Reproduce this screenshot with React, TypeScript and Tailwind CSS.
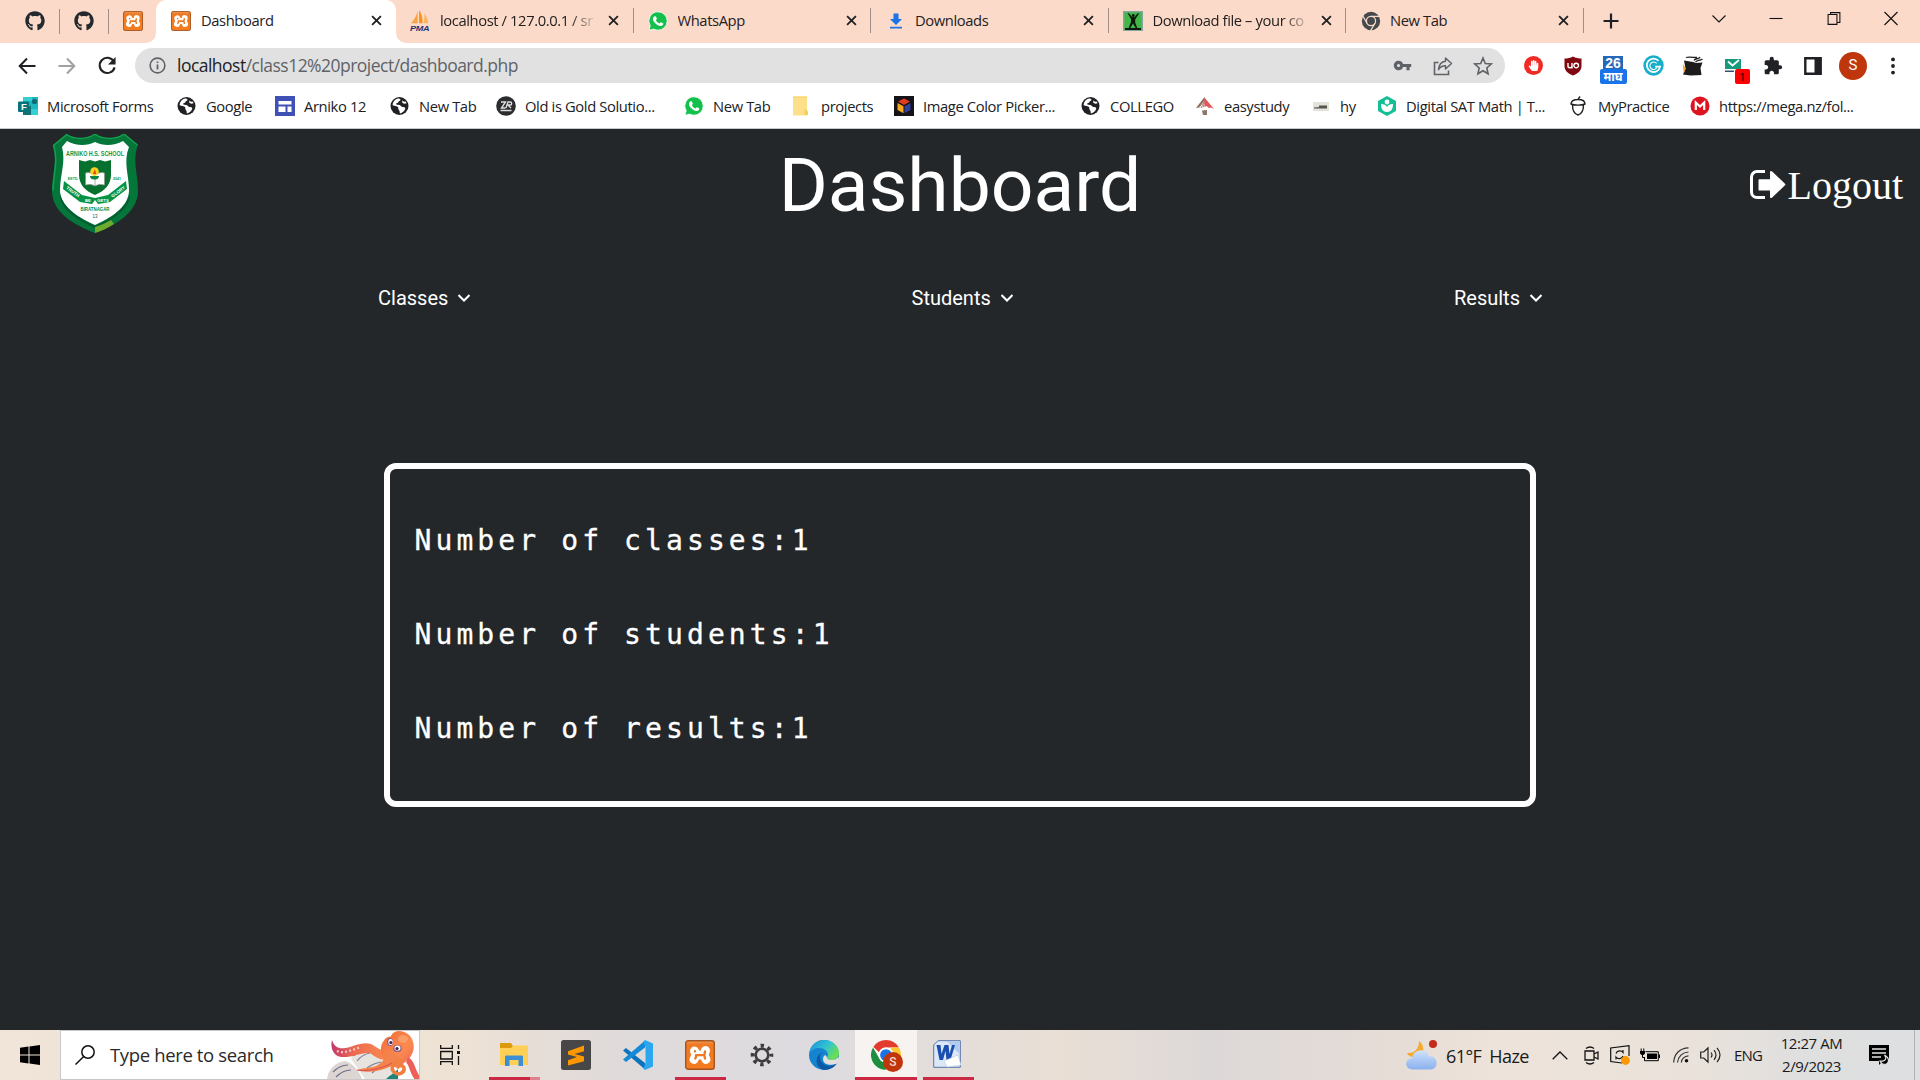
import React from "react";
import { FaGithub, FaHandPaper } from "react-icons/fa";
import { MdExtension, MdVpnKey } from "react-icons/md";

type P = { className?: string };

const Xampp = ({ className = "" }: P) => (
  <svg viewBox="0 0 30 30" className={className}>
    <defs>
      <linearGradient id="xg" x1="0" y1="0" x2="0" y2="1">
        <stop offset="0" stopColor="#f3a064" />
        <stop offset="0.12" stopColor="#ee7a24" />
        <stop offset="1" stopColor="#f57c20" />
      </linearGradient>
    </defs>
    <rect x="0.7" y="0.7" width="28.6" height="28.6" rx="2.6" fill="url(#xg)" stroke="#a3541f" strokeWidth="1.4" />
    <g fill="none" strokeLinecap="round" strokeLinejoin="round">
      <path d="M9.500 11L11 15 9 19.500M20.500 10.500L19 15l2 4.500M11 15h8" stroke="#fff" strokeWidth="9" />
      <path d="M10 11.200v.3M11 17v-1.800h8M20 11.500l-.7 3.500.7 3.500M10.300 18.500l.7-1.500" stroke="#f07a22" strokeWidth="2.300" />
      <path d="M15 7v2.500M15 20.500V23" stroke="#f07a22" strokeWidth="1.600" />
    </g>
  </svg>
);

const Whatsapp = ({ className = "" }: P) => (
  <svg viewBox="0 0 20 20" className={className}>
    <path d="M10 .8a9.200 9.200 0 0 1 0 18.400c-1.600 0-3-.4-4.300-1.100L1 19.300l1.200-4.500A9.200 9.200 0 0 1 10 .8z" fill="#12c04b" stroke="#fff" strokeWidth=".8" />
    <path d="M7.200 5.200c.5 0 .6.100.8.500l.8 1.900c.1.300 0 .5-.9 1.600.9 1.700 2.100 2.700 3.700 3.300 1-1.300 1.100-1.400 1.500-1.200l1.900.9c.4.200.4.400.3.900-.3 1.500-1.600 2-2.700 2-3.600-.3-7.300-3.800-7.700-7-.1-1.300.8-2.900 2.300-2.900z" fill="#fff" />
  </svg>
);

const Globe = ({ className = "" }: P) => (
  <svg viewBox="0 0 20 20" className={className}>
    <circle cx="9.500" cy="10" r="9" fill="#202124" />
    <path d="M8.200 2.400c1.200 0 2.600.5 2.300 1.600-.3 1-1.900.8-2 1.900 0 1.200-2.300.6-2.400 2 0 1 2.800.5 4 1.300 1.300.9 1.700 2 3.300 1.900 1.500 0 2.200 1 1.700 2.200-.6 1.700-2.600 3.900-5 4.100-.7-.5-.2-1.700-.6-2.500-.4-.9-1.300-1.300-1.200-2.500.1-1.100-.6-1.900-2-2.100L2.600 9.200C2.800 5.700 5 3 8.200 2.400z" fill="#fff" />
    <path d="M12.200 4.500l2 1.200 1.400-.3 1 1.800-2.300.6-2-1z" fill="#fff" />
  </svg>
);

const Chrome = ({ className = "" }: P) => (
  <svg viewBox="0 0 48 48" className={className}>
    <circle cx="24" cy="24" r="24" fill="#fff" />
    <path d="M24 0a24 24 0 0 1 20.800 12H24a12 12 0 0 0-11.200 7.700L3.800 11A24 24 0 0 1 24 0z" fill="#e33b2e" />
    <path d="M44.800 12A24 24 0 0 1 24 48l10.400-18A12 12 0 0 0 32 15l-1-3z" fill="#fcc934" />
    <path d="M3.200 12l10.400 18A12 12 0 0 0 27 35.600L23 48A24 24 0 0 1 3.200 12z" fill="#1e8e3e" />
    <circle cx="24" cy="24" r="12" fill="#fff" />
    <circle cx="24" cy="24" r="9.400" fill="#1a73e8" />
  </svg>
);

const ChromeGray = ({ className = "" }: P) => (
  <svg viewBox="0 0 48 48" className={className}>
    <circle cx="24" cy="24" r="22" fill="#45494d" />
    <g stroke="#fbdac9" strokeWidth="3" fill="none">
      <circle cx="24" cy="24" r="11" />
      <path d="M24 13h20M14.500 29.500L4.500 12M33.500 29.500L23 47" />
    </g>
    <circle cx="24" cy="24" r="7" fill="#45494d" />
  </svg>
);

const Pma = ({ className = "" }: P) => (
  <svg viewBox="0 0 22 24" className={className}>
    <path d="M8 2v13H1C4 12 6.500 8 8 2z" fill="#f9a33a" />
    <path d="M9.500 1c3 4 4 9 3.500 14H9.500z" fill="#f7931e" />
    <path d="M15 5c2.500 3 4 7 4 10h-5c1-3 1.200-6 1-10z" fill="#fbb55c" />
    <text x="0" y="23.500" fontSize="8.500" fontWeight="700" fontStyle="italic" textLength="20" lengthAdjust="spacingAndGlyphs" fill="#2b3271" fontFamily="Liberation Sans">PMA</text>
  </svg>
);

const DownloadIcon = ({ className = "" }: P) => (
  <svg viewBox="0 0 20 20" className={className}>
    <path d="M7.500 2.500h5v5.500h3.500l-6 6-6-6h3.500z" fill="#1a73e8" />
    <path d="M4 15.800h12v1.700H4z" fill="#1a73e8" />
  </svg>
);

const ManIcon = ({ className = "" }: P) => (
  <svg viewBox="0 0 20 20" className={className}>
    <rect x=".7" y=".7" width="18.600" height="18.600" fill="#43b649" stroke="#83a79a" strokeWidth="1.400" />
    <path d="M4.500 2l1 0 3.700 4L10 5l1.500 1L15 2l1 .5L12.200 8.500v3l2.300 6h-1.500L10 12.500l-3 5H5.500L8 11V8z" fill="#0b1a0c" />
    <circle cx="10.300" cy="4.300" r="1.400" fill="#0b1a0c" />
    <path d="M2 17h16v2H2z" fill="#0b1a0c" />
  </svg>
);

const Close = () => (
  <svg viewBox="0 0 12 12" className="size-[11px] shrink-0">
    <path d="M1.200 1.200l9.600 9.600M10.800 1.200L1.200 10.800" stroke="#202124" strokeWidth="2" />
  </svg>
);

const inactiveTabs = [
  { icon: <Pma className="h-[23px] w-[21px]" />, label: "localhost / 127.0.0.1 / sr", fade: true },
  { icon: <Whatsapp className="size-5" />, label: "WhatsApp" },
  { icon: <DownloadIcon className="size-5" />, label: "Downloads" },
  { icon: <ManIcon className="size-5" />, label: "Download file – your co", fade: true },
  { icon: <ChromeGray className="size-5" />, label: "New Tab" },
];

function TabStrip() {
  return (
    <div className="flex h-[43px] bg-[#fbdac9] text-[14.75px] tracking-[-0.4px] text-[#24201f]">
      <div className="flex w-[156px] shrink-0 items-center pb-px">
        <FaGithub className="ml-[25px] size-[20px] text-[#24292f]" />
        <span className="ml-[14px] h-[25px] w-px bg-[#a28d84]" />
        <FaGithub className="ml-[14px] size-[20px] text-[#24292f]" />
        <span className="ml-[14px] h-[25px] w-px bg-[#a28d84]" />
        <Xampp className="ml-[14px] size-[20px]" />
      </div>
      <div className="relative flex w-[240px] shrink-0 items-center rounded-t-[10px] bg-white pr-[14px] pb-[2px] pl-[15px]">
        <svg viewBox="0 0 10 10" className="absolute bottom-0 -left-[10px] size-[10px]"><path d="M10 0v10H0A10 10 0 0 0 10 0z" fill="#fff" /></svg>
        <svg viewBox="0 0 10 10" className="absolute -right-[10px] bottom-0 size-[10px]"><path d="M0 0v10h10A10 10 0 0 1 0 0z" fill="#fff" /></svg>
        <Xampp className="size-[20px] shrink-0" />
        <span className="ml-[10px] flex-1">Dashboard</span>
        <Close />
      </div>
      <div className="flex">
        {inactiveTabs.map((t, i) => (
          <div key={i} className="flex w-[237.5px] items-center pb-[2px] pl-[14px]">
            <span className="flex w-[21px] shrink-0 justify-center">{t.icon}</span>
            <span className={"ml-[9px] w-[158px] shrink-0 overflow-hidden whitespace-nowrap " + (t.fade ? "[mask-image:linear-gradient(to_right,#000_82%,transparent)]" : "")}>{t.label}</span>
            <span className="ml-[10px] flex flex-1 items-center justify-between"><Close /><span className="h-[25px] w-px bg-[#a28d84]" /></span>
          </div>
        ))}
      </div>
      <svg viewBox="0 0 16 16" className="mt-[13px] ml-[19.500px] size-4 shrink-0"><path d="M8 .5v15M.5 8h15" stroke="#202124" strokeWidth="2.200" /></svg>
      <div className="ml-auto flex pt-[11px]">
        <svg viewBox="0 0 58 16" className="h-4 w-[58px]"><path d="M23.500 4.500L30 11l6.500-6.500" fill="none" stroke="#111" strokeWidth="1.100" /></svg>
        <svg viewBox="0 0 58 16" className="h-4 w-[58px]"><path d="M22.500 7.500h13" stroke="#111" strokeWidth="1.100" /></svg>
        <svg viewBox="0 0 58 16" className="h-4 w-[57px]"><path d="M23.500 3.500h9v10h-9zM26 3.500v-2h9.500v10h-3" fill="none" stroke="#111" strokeWidth="1.100" /></svg>
        <svg viewBox="0 0 58 16" className="h-4 w-[58px]"><path d="M22.500 1l13 13M35.500 1l-13 13" stroke="#111" strokeWidth="1.100" /></svg>
      </div>
    </div>
  );
}

function Extensions() {
  return (
    <div className="ml-[8px] flex items-center [&>*]:flex [&>*]:w-10 [&>*]:items-center [&>*]:justify-center">
      <span><span className="flex size-[19px] items-center justify-center rounded-full bg-[#f02a24] text-white"><FaHandPaper className="size-[11px]" /></span></span>
      <span>
        <svg viewBox="0 0 20 20" className="size-[20px]">
          <path d="M10 .5c2.500 1.500 5.500 2 8.500 2V10c0 5-4 7.500-8.500 9.500C5.500 17.500 1.500 15 1.500 10V2.500c3 0 6-.5 8.500-2z" fill="#800610" />
          <path d="M5 7v3.200c0 2 4 2 4 0V7v5.500M15.500 9.500a2.300 2.300 0 1 1-4.600 0 2.300 2.300 0 0 1 4.600 0z" fill="none" stroke="#fff" strokeWidth="1.400" />
        </svg>
      </span>
      <span>
        <span className="mt-[9px] flex flex-col items-center">
          <span className="flex h-[13px] w-[20px] items-center justify-center bg-[#2668b8] font-['Liberation_Sans',sans-serif] text-[14px] leading-none font-bold text-white">26</span>
          <span className="flex h-[15px] w-[27px] items-center justify-center overflow-hidden rounded-[2px] bg-[#1a73e8] text-[12px] leading-none font-bold text-white">माघ</span>
        </span>
      </span>
      <span>
        <svg viewBox="0 0 20 20" className="size-[21px]">
          <circle cx="10" cy="10" r="9.700" fill="#19aec8" />
          <path d="M14.800 5.500A6.400 6.400 0 1 0 16.300 11h-4.800" fill="none" stroke="#fff" strokeWidth="1.700" />
          <path d="M13 8a3.600 3.600 0 1 0 .3 4" fill="none" stroke="#fff" strokeWidth="1" />
        </svg>
      </span>
      <span>
        <svg viewBox="0 0 22 22" className="size-[22px]">
          <path d="M2 5.500l9 1.500 3 1 6.500-.5-2 5.500 1 7-11 .5-7.500-1 2.500-6z" fill="#1c1c1c" />
          <path d="M12 5.500c1-3 5-.5 6-3.500M13.500 7c2-2 4-1 7-3M4 2.500c2-1 8 0 11 0" fill="none" stroke="#222" strokeWidth="1.300" />
          <path d="M.8 9l3 4.500-2 5z" fill="#f0a030" />
        </svg>
      </span>
      <span>
        <span className="relative flex size-[22px]">
          <svg viewBox="0 0 22 22" className="size-[22px]">
            <path d="M3 4h16v10H3z" fill="#159a7c" />
            <path d="M6 6.500l4.500 4L17 5" fill="none" stroke="#fff" strokeWidth="1.800" />
            <path d="M3 15.500h9V17H3z" fill="#34536b" />
          </svg>
          <span className="absolute top-[14px] left-[13px] flex h-[15px] w-[15px] items-center justify-center rounded-[2px] bg-[#fe0000] text-[11px] leading-none text-black">1</span>
        </span>
      </span>
      <span><MdExtension className="size-[20px] text-[#202124]" /></span>
      <span><svg viewBox="0 0 18 18" className="size-[18px]"><path d="M1.300 1.300h15.400v15.400H1.300z" fill="#fff" stroke="#202124" strokeWidth="2.400" /><path d="M10.500 1H17v16h-6.500z" fill="#202124" /></svg></span>
      <span><span className="flex size-[28px] items-center justify-center rounded-full bg-[#bf360c] font-['Roboto',sans-serif] text-[15px] text-white">S</span></span>
      <span><svg viewBox="0 0 4 18" className="h-[18px] w-1"><circle cx="2" cy="2.400" r="1.900" fill="#202124" /><circle cx="2" cy="9" r="1.900" fill="#202124" /><circle cx="2" cy="15.600" r="1.900" fill="#202124" /></svg></span>
    </div>
  );
}

function Toolbar() {
  return (
    <div className="flex h-[45px] items-center bg-white">
      <svg viewBox="0 0 18 18" className="ml-[18px] size-[18px]"><path d="M17.500 9H2M9 1.500L1.700 9 9 16.500" fill="none" stroke="#202124" strokeWidth="2" /></svg>
      <svg viewBox="0 0 18 18" className="ml-[22px] size-[18px]"><path d="M.5 9H16M9 1.500L16.300 9 9 16.500" fill="none" stroke="#a0a1a3" strokeWidth="2" /></svg>
      <svg viewBox="0 0 20 20" className="ml-[22px] size-[19px]"><path d="M16.500 5.500A8 8 0 1 0 17.500 12" fill="none" stroke="#202124" strokeWidth="2.200" /><path d="M18.500 1v8h-8z" fill="#202124" /></svg>
      <div className="ml-[18px] flex h-[35px] w-[1370px] items-center rounded-full bg-[#e1e1e1] text-[#5f6368]">
        <svg viewBox="0 0 18 18" className="ml-[14px] size-[17px]"><circle cx="9" cy="9" r="7.800" fill="none" stroke="#5f6368" strokeWidth="1.700" /><path d="M9 8v5.200M9 4.700v1.700" stroke="#5f6368" strokeWidth="1.900" /></svg>
        <span className="ml-[11px] flex-1 text-[17.500px] tracking-[-0.520px]"><span className="text-[#202124]">localhost</span>/class12%20project/dashboard.php</span>
        <MdVpnKey className="mr-[21px] size-[19px]" />
        <svg viewBox="0 0 20 20" className="mr-[20px] size-[20px]"><path d="M5.500 6.500H1.500v12h14v-4" fill="none" stroke="#5f6368" strokeWidth="1.600" /><path d="M12.500 2l6 5.500-6 5.500v-3.300c-3 0-5.500 1-7 4 .3-4 2.500-8 7-8.500z" fill="none" stroke="#5f6368" strokeWidth="1.500" strokeLinejoin="round" /></svg>
        <svg viewBox="0 0 20 20" className="mr-[12px] size-[20px]"><path d="M10 2l2.300 5.500 6 .5-4.500 4 1.300 5.800L10 14.700l-5.100 3.100L6.200 12 1.700 8l6-.5z" fill="none" stroke="#5f6368" strokeWidth="1.600" /></svg>
      </div>
      <Extensions />
    </div>
  );
}

const bookmarks = [
  { w: "w-[159px]", label: "Microsoft Forms", icon: <svg viewBox="0 0 20 20" className="size-5"><path d="M5 1h15v18H5z" fill="#1fb5bd" /><path d="M5 1h9v4H5zM12 13h8v6h-8z" fill="#35cfd2" /><path d="M5 10h8v9H5z" fill="#0f7076" /><circle cx="16.500" cy="5.500" r="2.600" fill="#0b6c75" /><rect y="5.500" width="11" height="10.500" rx="1" fill="#04747b" /><text x="3" y="14" fontSize="9.500" fontWeight="700" fill="#fff" fontFamily="Liberation Sans">F</text></svg> },
  { w: "w-[98px]", label: "Google", icon: <Globe className="size-5" /> },
  { w: "w-[115px]", label: "Arniko 12", icon: <svg viewBox="0 0 20 20" className="size-5"><path d="M0 0h20v20H0z" fill="#3f51b5" /><path d="M3.500 5h13v3.600h-13zM3.500 10.500h7V16h-7zM12.500 10.500h4V16h-4z" fill="#fff" /></svg> },
  { w: "w-[106px]", label: "New Tab", icon: <Globe className="size-5" /> },
  { w: "w-[188px]", label: "Old is Gold Solutio...", icon: <svg viewBox="0 0 20 20" className="size-5"><circle cx="10" cy="10" r="9.800" fill="#2b2c2e" /><path d="M5 6h4.500L5.500 12h4M10 12l2-6h2.500c1.500 0 1.500 3 0 3h-2.500l3 3M4.500 14.500h11" fill="none" stroke="#ddd" strokeWidth="1.400" /></svg> },
  { w: "w-[108px]", label: "New Tab", icon: <Whatsapp className="size-5" /> },
  { w: "w-[102px]", label: "projects", icon: <svg viewBox="0 0 20 20" className="size-5"><path d="M1 .5h14v19H1z" fill="#ffe08a" /><path d="M1 .5h14v1.500H1z" fill="#fbd668" /><path d="M12.500 13c2 0 3.500 1.500 3.500 4v2h-3.500z" fill="#f7cf5c" /></svg> },
  { w: "w-[187px]", label: "Image Color Picker...", icon: <svg viewBox="0 0 20 20" className="size-5"><path d="M0 0h20v20H0z" fill="#151318" /><path d="M10 2.500l6 3-6 3.500-6-3.500z" fill="#e23b1f" /><path d="M3.500 7l6 3.300v7l-6-3.300z" fill="#f7a71c" /><path d="M16.500 7l-6 3.300v7l6-3.300z" fill="#31419c" /></svg> },
  { w: "w-[114px]", label: "COLLEGO", icon: <Globe className="size-5" /> },
  { w: "w-[116px]", label: "easystudy", icon: <svg viewBox="0 0 20 20" className="size-5"><path d="M9.500 1L1 12l2.500-.5L10 4z" fill="#8b6b5c" /><path d="M9 5l-5.500 7M10.500 3.500L6 12M10 5.500l-2 6" stroke="#a48578" strokeWidth="1" /><path d="M9.500 1.500L19 13l-3-1.500-2 .5-2.500-2-2 1z" fill="#e4565a" /><path d="M7 14.500l5-.5v5H8z" fill="#8c7668" /></svg> },
  { w: "w-[66px]", label: "hy", icon: <svg viewBox="0 0 20 20" className="size-5"><path d="M2 6h16v9H2z" fill="#e4e3da" /><path d="M3 11.500l13-1v2H3zM8 9.500h8V11H8z" fill="#55554f" /></svg> },
  { w: "w-[192px]", label: "Digital SAT Math | T...", icon: <svg viewBox="0 0 20 20" className="size-5"><path d="M10 0l9 5v10l-9 5-9-5V5z" fill="#14bf96" /><circle cx="10" cy="6" r="2.400" fill="#fff" /><path d="M4 8c3 0 5 1 6 3 1-2 3-3 6-3 0 5-2 8-6 8s-6-3-6-8z" fill="#fff" /></svg> },
  { w: "w-[121px]", label: "MyPractice", icon: <svg viewBox="0 0 20 20" className="size-5"><path d="M2 8c0-3 2.500-4.500 7-4.500S16 5 16 8c-3 1.500-11 1.500-14 0zM3.500 9c0 5 2 9 5.500 10 3.500-1 5.500-5 5.500-10M9 3.500L11 .500" fill="none" stroke="#202124" strokeWidth="1.400" /></svg> },
  { w: "w-[190px]", label: "https://mega.nz/fol...", icon: <svg viewBox="0 0 20 20" className="size-5"><circle cx="10" cy="10" r="9.500" fill="#dd1320" /><path d="M5.800 14V6.500l4.200 4 4.200-4V14" fill="none" stroke="#fff" strokeWidth="2.200" /></svg> },
];

function Bookmarks() {
  return (
    <div className="flex h-[40px] items-center bg-white pb-[4px] pl-[18px] text-[14.75px] tracking-[-0.38px] text-[#202124]">
      {bookmarks.map((b, i) => (
        <div key={i} className={"flex h-full shrink-0 items-center gap-[9px] whitespace-nowrap " + b.w}>
          <span className="flex size-5 shrink-0 items-center justify-center">{b.icon}</span>
          {b.label}
        </div>
      ))}
    </div>
  );
}

const SchoolLogo = () => (
  <svg viewBox="0 0 86 99" className="h-[99px] w-[86px]" fontFamily="Liberation Sans" fontWeight="700" textAnchor="middle">
    <path d="M14 0c8 6 21 6 29 0 8 6 21 6 29 0l14 11c-6 15 0 28 0 46 0 21-22 34-43 42C22 91 0 78 0 57 0 39 6 26 1 11z" fill="#04763a" />
    <path d="M14 0c8 6 21 6 29 0 8 6 21 6 29 0l13.500 11M14.500 1L1.500 11.500c5 14 0 28-.5 45" fill="none" stroke="#12a04c" strokeWidth="1.500" />
    <path d="M15 7c9 5 20 5 28 1 8 4 19 4 28-1l6 6c-6 15 0 28 0 43 0 15-14 26-34 35C23 82 8 71 8 56c0-15 6-28 2-43z" fill="#fff" />
    <path d="M43 92c18-8 32-19 35-32v4c-3 12-16 21-35 30-20-9-32-18-35-30v-4c3 13 17 24 35 32z" fill="#045a31" />
    <path d="M43 93c6-2 11-4 16-7l3 4c-6 4-12 7-19 9z" fill="#6dab2c" />
    <text x="43" y="22.300" fontSize="6.800" textLength="58" lengthAdjust="spacingAndGlyphs" fill="#0a9a49">ARNIKO H.S. SCHOOL</text>
    <path d="M27 26l6 1.500 5-1.500 5 1.500 5-1.500 5 1.500 6-1.500v15c0 9-6 16-16 20-10-4-16-11-16-20z" fill="#06702f" />
    <path d="M33.500 39c4-1 7 0 9.500 2 2.500-2 5.500-3 9.500-2v12c-4-1-7-.500-9.500 1-2.500-1.500-5.500-2-9.500-1z" fill="#fff" stroke="#8c8f88" strokeWidth=".7" />
    <path d="M43 41v11" stroke="#888" strokeWidth=".7" />
    <circle cx="42.500" cy="37.500" r="4.300" fill="#f8d21c" />
    <path d="M43 35l-2 5h3z" fill="#e03a1c" />
    <path d="M38 42h9c0 3-3 3.500-4.500 3.500S38 45 38 42z" fill="#108548" />
    <text x="21" y="45.500" fontSize="3.600" fill="#0a9a49">ESTD.</text>
    <text x="65" y="45.500" fontSize="3.600" fill="#0a9a49">2041</text>
    <path d="M12 47l18 14 13 3 13-3 18-14 1 8-17 13-12 2-3-4-3 4-12-2-17-13z" fill="#079345" />
    <text x="0" y="0" fontSize="4.500" fill="#fff" transform="translate(20 59) rotate(36)">TRUTH</text>
    <text x="0" y="0" fontSize="4.500" fill="#fff" transform="translate(67 59) rotate(-36)">GLORY</text>
    <text x="36" y="68" fontSize="4.200" fill="#fff">BE</text>
    <text x="51" y="67.500" fontSize="4.200" fill="#fff">GETS</text>
    <text x="43" y="76.500" fontSize="4.600" textLength="29" lengthAdjust="spacingAndGlyphs" fill="#0a8a43">BIRATNAGAR</text>
    <text x="43" y="84" fontSize="4.500" fontWeight="400" fill="#444">13</text>
  </svg>
);

const stats = [
  { label: "classes", n: 1 },
  { label: "students", n: 1 },
  { label: "results", n: 1 },
];

function Page() {
  return (
    <main className="flex h-[901px] flex-col bg-[#23272a] text-white">
      <header className="grid h-[113px] grid-cols-[1fr_auto_1fr] items-center">
        <div className="-mt-[5px] pl-[52px]"><SchoolLogo /></div>
        <h1 className="-mt-[2px] font-['Roboto',sans-serif] text-[75px] leading-[88px]">Dashboard</h1>
        <div className="flex items-center justify-end pr-[17px] font-['Liberation_Serif',serif] text-[40px] leading-[44px]">
          <svg viewBox="0 0 36 29" className="-mt-[2px] mr-[1px] h-[29px] w-[36px]">
            <path d="M15 1.500H7A5.500 5.500 0 0 0 1.500 7v15A5.500 5.500 0 0 0 7 27.500h8" fill="none" stroke="#fff" strokeWidth="3" />
            <path d="M9.500 9.300H20V2.300c0-1.600 1.200-1.800 2.200-.8L35 13.700c.6.600.6 1 0 1.600L22.200 27.500c-1 1-2.200.8-2.200-.8V20.500H9.500c-.8 0-1-.3-1-1v-9.200c0-.7.300-1 1-1z" fill="#fff" />
          </svg>
          <span>Logout</span>
        </div>
      </header>
      <nav className="flex h-[112px] items-center justify-between pr-[378px] pl-[378px] font-['Roboto',sans-serif] text-[20px]">
        {["Classes", "Students", "Results"].map((n) => (
          <div key={n} className="flex items-center">
            {n}
            <svg viewBox="0 0 12 8" className="ml-[10px] h-2 w-3"><path d="M.5 1l5.500 5.500L11.500 1" fill="none" stroke="#fff" strokeWidth="2" /></svg>
          </div>
        ))}
      </nav>
      <section className="mx-[384px] mt-[109px] h-[344px] rounded-[12px] border-6 border-white pt-[25px] pl-[24.500px] font-['DejaVu_Sans_Mono',monospace] text-[28px] leading-[94px] tracking-[4.100px] [-webkit-text-stroke:0.3px_white]">
        {stats.map((s) => (
          <p key={s.label}>Number of {s.label}:{s.n}</p>
        ))}
      </section>
    </main>
  );
}

const Octopus = () => (
  <svg viewBox="0 0 92 48" className="h-[48px] w-[92px]">
    <defs>
      <linearGradient id="oc" x1="0" y1="0" x2="1" y2="1">
        <stop offset="0" stopColor="#f06a3a" />
        <stop offset=".6" stopColor="#fb8a4e" />
        <stop offset="1" stopColor="#f0645a" />
      </linearGradient>
      <linearGradient id="arm" x1="0" y1="0" x2="1" y2="0">
        <stop offset="0" stopColor="#c2386b" />
        <stop offset=".35" stopColor="#ee6a50" />
        <stop offset="1" stopColor="#fb8f50" />
      </linearGradient>
    </defs>
    <path d="M0 48c1-9 8-17 18-18 8 2 14 10 17 18z" fill="#dcd5d2" />
    <path d="M6 41c4-4 9-7 15-7M9 46c4-4 9-7 15-7" fill="none" stroke="#6c6f8c" strokeWidth="1.100" />
    <path d="M24 28c2-6 6-11 12-12 12 3 24 14 34 32H38z" fill="#e7e3de" />
    <path d="M27 25c3-4 7-6 12-7M30 30c3-4 8-7 13-8M40 37c4-3 9-5 14-6M45 42c4-4 8-6 13-7" fill="none" stroke="#7b7e96" strokeWidth="1.100" />
    <path d="M59 48c4-4 9-6 12-10v10z" fill="#1c8573" />
    <path d="M68 23C60 23 52 18 44 13c-9-3-18 3-26 4-6 1-11-1-13-8-2 7 1 16 9 17 11 1 20-5 29-4 4 3 8 6 14 7z" fill="url(#arm)" />
    <path d="M10 20c6 3 15-1 24-4" fill="none" stroke="#f6cfd4" strokeWidth="2.200" strokeDasharray="1.800 2.400" />
    <path d="M58 8C61 5 64 6 64 5 66 0 72-1 77 1c9 3 12 14 8 22-3 7-8 8-10 11-5 4-13 2-15-3-3-4-7-7-6-13 0-5 2-7 4-10z" fill="url(#oc)" />
    <path d="M56 18c4 8 1 13-7 17-6 2-13 2-19 4 10 4 32 1 46-11z" fill="#f4824b" />
    <path d="M30 39c10 2 24-1 35-7" fill="none" stroke="#d94e55" strokeWidth="1" />
    <path d="M75 30c-9 0-12 7-8 11 4 4 11 1 10-4-1-3-5-3-6-1" fill="none" stroke="#f0803f" strokeWidth="3.600" strokeLinecap="round" />
    <path d="M80 29c6 2 4 12 12 20" fill="none" stroke="#ee5f58" strokeWidth="6" />
    <ellipse cx="63" cy="11" rx="3" ry="4" fill="#8a5c8c" /><ellipse cx="70.500" cy="17.500" rx="4.200" ry="3.600" fill="#8a5c8c" />
    <ellipse cx="63.500" cy="11" rx="2.200" ry="3" fill="#fff" /><ellipse cx="70.500" cy="17" rx="3" ry="2.600" fill="#fff" />
    <circle cx="63.800" cy="11.500" r="1.500" fill="#43203a" /><circle cx="70" cy="17.500" r="1.600" fill="#43203a" />
    <ellipse cx="76" cy="8" rx="5" ry="4" fill="#fcb07c" opacity=".6" />
  </svg>
);

const apps = [
  { bar: "explorer", icon: <svg viewBox="0 0 28 24" className="h-6 w-7"><path d="M0 0h11l2 3v4H0z" fill="#dd9a0a" /><path d="M0 5h11l2-2.500h15V22H0z" fill="#ffcf56" /><path d="M5 23V14c0-1 .5-1.500 1.500-1.500h15c1 0 1.500.5 1.500 1.500v9h-4.500v-6h-9v6z" fill="#3d8fd4" /></svg> },
  { bar: "", icon: <svg viewBox="0 0 30 30" className="size-[30px]"><rect width="30" height="30" rx="2.500" fill="#474747" /><path d="M7 11.300L23 5.500v5.800L13.500 14l9.500 2.600v4.600L7 25.500v-5.300l9-3.200-9-2.500z" fill="#ff9800" /></svg> },
  { bar: "", icon: <svg viewBox="0 0 30 30" className="size-[30px]"><path d="M0 10.500L3 8l19 15v6.500z" fill="#0d74bb" /><path d="M0 19.500L3 22 22 7.500V.5z" fill="#1489d6" /><path d="M22 0l8 3.500v23L22 30l-1.500-1.500L22.500 23V7l-2-5.500z" fill="#2aa7ee" /></svg> },
  { bar: "full", icon: <Xampp className="size-[30px]" /> },
  { bar: "", icon: <svg viewBox="0 0 24 24" className="size-6"><circle cx="12" cy="12" r="6.300" fill="none" stroke="#3d3d3f" strokeWidth="2.600" /><circle cx="12" cy="12" r="9.300" fill="none" stroke="#3d3d3f" strokeWidth="4" strokeDasharray="3.400 3.904" strokeDashoffset="1.700" /></svg> },
  { bar: "", icon: <svg viewBox="0 0 30 30" className="size-[30px]"><defs><linearGradient id="eg" x1="0" y1="0" x2="1" y2=".6"><stop offset="0" stopColor="#1b8fd8" /><stop offset=".55" stopColor="#30c2d4" /><stop offset="1" stopColor="#6be04e" /></linearGradient></defs><circle cx="15" cy="15" r="15" fill="#1583cf" /><path d="M.3 13C1.500 5.500 7.500 0 15 0c8.500 0 15 6 15 13 0 4.500-3.500 7-7.500 7-3 0-4.500-1-4.500-2.500 0-1 1-1.500 1-3 0-3.500-4-6.500-9-6.500C5.500 8 2 10 .3 13z" fill="url(#eg)" /><path d="M11 17c0 6 6 10 12 8.500 2-.5 3.500-1.200 5-2.500C26 27 21 30 15.500 30 9 29 6.500 23 8 18c1-3 4-5.500 7-5.500-2 .5-4 1.500-4 4.500z" fill="#0c59a4" /><path d="M18 17.500c0 1.500 1.500 2.500 4.500 2.500 3 0 5.500-1 6.800-3.300L30 19l-2 4.300c-4 2.500-14 2.500-14-4.300 0-2 1-3.500 2.500-4z" fill="#e4dfdc" /></svg> },
  { bar: "active", icon: <span className="relative flex size-[30px]"><Chrome className="size-[30px]" /><span className="absolute top-[12px] left-[12px] flex size-5 items-center justify-center rounded-full bg-[#bf360c] font-['Roboto',sans-serif] text-[12px] font-medium text-[#f3d5ca]">S</span></span> },
  { bar: "full", icon: <svg viewBox="0 0 28 28" className="-mt-[2px] mr-[3px] size-7"><path d="M5 .7h22.300v26.600H.7V5z" fill="#dce8f8" stroke="#5575a8" strokeWidth="1" /><path d="M14 1.500h12.500V14z" fill="#b0cbee" /><path d="M3.500 5l3 15h3.500l2.500-9 1 9h4l4.500-15H19l-2.500 9-1-9h-4l-3 9-1-9z" fill="#1b4fae" /><path d="M11 21l14-6 3 10-14 2z" fill="#fff" stroke="#b6c5da" strokeWidth=".6" /></svg> },
];

function Taskbar() {
  return (
    <footer className="flex h-[50px] bg-[linear-gradient(90deg,#f1e4d8_0%,#eee2d5_24%,#e0dad9_31%,#dddbe0_42%,#e9dfd5_55%,#ddd8d8_63%,#e5dcd6_72%,#ede3da_78%,#eae2da_88%,#dfdfdf_94%,#dedfe1_100%)] text-[#1a1a1a]">
      <div className="flex w-[60px] items-center justify-center">
        <svg viewBox="0 0 20 20" className="size-5"><path d="M0 2.800L8.500 1.600V9.500H0zM9.500 1.400L20 0v9.500H9.500zM0 10.500h8.500v7.900L0 17.200zM9.500 10.500H20V20L9.500 18.600z" fill="#000" /></svg>
      </div>
      <div className="flex w-[360px] items-center border border-[#c8c8ca] bg-white">
        <svg viewBox="0 0 20 20" className="ml-[14px] size-5"><circle cx="13" cy="7" r="6.200" fill="none" stroke="#111" strokeWidth="1.500" /><path d="M8.700 11.500L.5 19.500" stroke="#111" strokeWidth="1.500" /></svg>
        <span className="ml-[15px] flex-1 text-[18.500px] tracking-[-0.360px] whitespace-nowrap text-[#2a2a2a]">Type here to search</span>
        <Octopus />
      </div>
      <div className="flex w-[63px] items-center pl-[20px]">
        <svg viewBox="0 0 20 20" className="size-5"><path d="M.7 0v3.300h11.600V0M.7 20v-3.300h11.600V20M.7 6.500h11.600v7.500H.7zM18.500 0v4M18.500 11v9" fill="none" stroke="#111" strokeWidth="1.300" /><path d="M17 6h3v3h-3z" fill="#111" /></svg>
      </div>
      <div className="flex">
        {apps.map((a, i) => (
          <div key={i} className={"flex w-[62px] flex-col items-center " + (a.bar === "active" ? "bg-[#f6f3f1]" : "")}>
            <span className="flex flex-1 items-center pt-[3px]">{a.icon}</span>
            {a.bar === "explorer" && <span className="flex h-[3px] w-[51px] self-center bg-[#e2808f]"><span className="w-[41px] bg-[#cb2843]" /></span>}
            {a.bar === "full" && <span className="h-[3px] w-[51px] bg-[#cb2843]" />}
            {a.bar === "active" && <span className="h-[3px] w-full bg-[#cb2843]" />}
            {a.bar === "" && <span className="h-[3px]" />}
          </div>
        ))}
      </div>
      <div className="ml-auto flex items-center">
        <svg viewBox="0 0 31 30" className="-mt-[1px] mr-[9px] h-[30px] w-[31px]">
          <defs><linearGradient id="cl" x1="0" y1="0" x2="0" y2="1"><stop offset="0" stopColor="#cfe2fb" /><stop offset="1" stopColor="#8ab1ee" /></linearGradient></defs>
          <path d="M13 1c6 4 6 14-2 16-5 1-9-1-10-4 8 1 12-5 12-12z" fill="#f4ab2d" />
          <circle cx="27" cy="4" r="4" fill="#c42b1c" />
          <path d="M7 29.500c-9 0-9-11-1-11 1-10 15-11 17-2 9-2 11 13 1 13z" fill="url(#cl)" />
        </svg>
        <span className="w-[106px] pt-[2px] text-[18px] tracking-[-0.600px] whitespace-pre">61°F  Haze</span>
        <svg viewBox="0 0 16 9" className="mr-[16px] h-[9px] w-4"><path d="M.7 8.300L8 1l7.300 7.300" fill="none" stroke="#111" strokeWidth="1.300" /></svg>
        <svg viewBox="0 0 15 19" className="mr-[11px] h-[19px] w-[15px]"><path d="M1 5h9v9H1zM10 8l4-2v7l-4-2M2 2.500Q6-.500 10 2.500M2 16.500q4 3 8 0" fill="none" stroke="#111" strokeWidth="1.300" /></svg>
        <svg viewBox="0 0 20 20" className="mr-[10px] size-5"><path d="M12 18L.7 16.500V3L19 .7V11" fill="none" stroke="#111" strokeWidth="1.200" /><path d="M6 8.500c1-3 5-3.500 7-1V5M13 11c-1 3-5 3.500-7 1v2.500" fill="none" stroke="#111" strokeWidth="1.200" /><circle cx="15.500" cy="15.500" r="4.400" fill="#fb9800" /></svg>
        <svg viewBox="0 0 20 14" className="mr-[13px] h-[14px] w-5"><path d="M5.500 3.700h12.800v9H4.500V9" fill="none" stroke="#000" strokeWidth="1" /><path d="M7 5.500h10v5.500H7z" fill="#000" /><path d="M18.800 6.500H20v3.500h-1.200zM0 3h5v2.500L3.500 7h-2L0 5.500z" fill="#000" /><path d="M1.200 .5V3M3.800 .5V3M2.500 7v2.500h2" fill="none" stroke="#000" strokeWidth="1" /></svg>
        <svg viewBox="0 0 16 16" className="mr-[11px] size-4"><path d="M.7 15.500C1 7 7 1 15.500 .8M4.500 15.500C5 9.500 9.500 5.200 15.500 5M8.300 15.500c.2-3.500 3.200-6.500 7.200-6.700" fill="none" stroke="#333" strokeWidth="1.200" /><circle cx="13.500" cy="13.700" r="1.800" fill="#111" /></svg>
        <svg viewBox="0 0 21 18" className="mr-[13px] h-[18px] w-[21px]"><path d="M.7 6h3L8 2v14l-4.300-4h-3zM11 6.500q2 2.500 0 5M14 4.200q4 4.800 0 9.600M17 1.800q6 7.200 0 14.400" fill="none" stroke="#222" strokeWidth="1.200" /></svg>
        <span className="w-[46px] text-[15px] tracking-[-0.800px]">ENG</span>
        <span className="flex w-[63px] flex-col items-center text-[15px] leading-[23px] tracking-[-0.440px] whitespace-nowrap"><span>12:27 AM</span><span>2/9/2023</span></span>
        <svg viewBox="0 0 21 21" className="ml-[26px] size-[21px]"><path d="M0 0h20v16h-6l-4 4v-4H0z" fill="#000" /><path d="M3 4h14M3 8h14M3 12h9" stroke="#e6e4e1" strokeWidth="1.500" /><path d="M15.500 10c3 4 0 7-4.500 6 1 3 4 4 6.500 3s3.500-6-2-9z" fill="#000" stroke="#e2e0dd" strokeWidth="1.200" /></svg>
        <span className="ml-[24px] h-[50px] w-[6px] border-l border-[#b3b3b3]" />
      </div>
    </footer>
  );
}

export default function App() {
  return (
    <div className="flex h-[1080px] w-[1920px] flex-col overflow-hidden font-['Open_Sans','Noto_Sans',sans-serif]">
      <TabStrip />
      <Toolbar />
      <Bookmarks />
      <div className="h-px bg-[#c9c9c9]" />
      <Page />
      <Taskbar />
    </div>
  );
}
